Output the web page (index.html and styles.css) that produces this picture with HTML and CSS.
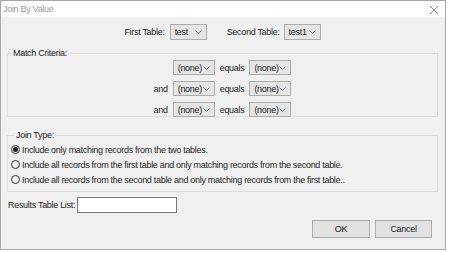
FILE: index.html
```html
<!DOCTYPE html>
<html lang="en">
<head>
    <meta charset="UTF-8">
    <title>Join By Value</title>
    <link rel="stylesheet" href="styles.css">
</head>
<body>
<div class="window">
    <div class="titlebar">
        <span class="title">Join By Value</span>
        <svg class="close" width="10" height="10" viewBox="0 0 10 10"><path d="M1 1L9 9M9 1L1 9" stroke="#8a8a8a" stroke-width="1"/></svg>
    </div>
    <div class="content">
        <div class="tables">
            <span class="label">First Table:</span>
            <div class="combo first">test<svg class="chev" width="7" height="4" viewBox="0 0 7 4"><path d="M0.5 0.5L3.5 3.5L6.5 0.5" fill="none" stroke="#7a7a7a"/></svg></div>
            <span class="label second-label">Second Table:</span>
            <div class="combo second">test1<svg class="chev" width="7" height="4" viewBox="0 0 7 4"><path d="M0.5 0.5L3.5 3.5L6.5 0.5" fill="none" stroke="#7a7a7a"/></svg></div>
        </div>

        <fieldset class="group match">
            <legend>Match Criteria:</legend>
            <div class="criteria">
                <span></span>
                <div class="combo field">(none)<svg class="chev" width="7" height="4" viewBox="0 0 7 4"><path d="M0.5 0.5L3.5 3.5L6.5 0.5" fill="none" stroke="#7a7a7a"/></svg></div>
                <span>equals</span>
                <div class="combo field">(none)<svg class="chev" width="7" height="4" viewBox="0 0 7 4"><path d="M0.5 0.5L3.5 3.5L6.5 0.5" fill="none" stroke="#7a7a7a"/></svg></div>

                <span>and</span>
                <div class="combo field">(none)<svg class="chev" width="7" height="4" viewBox="0 0 7 4"><path d="M0.5 0.5L3.5 3.5L6.5 0.5" fill="none" stroke="#7a7a7a"/></svg></div>
                <span>equals</span>
                <div class="combo field">(none)<svg class="chev" width="7" height="4" viewBox="0 0 7 4"><path d="M0.5 0.5L3.5 3.5L6.5 0.5" fill="none" stroke="#7a7a7a"/></svg></div>

                <span>and</span>
                <div class="combo field">(none)<svg class="chev" width="7" height="4" viewBox="0 0 7 4"><path d="M0.5 0.5L3.5 3.5L6.5 0.5" fill="none" stroke="#7a7a7a"/></svg></div>
                <span>equals</span>
                <div class="combo field">(none)<svg class="chev" width="7" height="4" viewBox="0 0 7 4"><path d="M0.5 0.5L3.5 3.5L6.5 0.5" fill="none" stroke="#7a7a7a"/></svg></div>
            </div>
        </fieldset>

        <fieldset class="group join">
            <legend>Join Type:</legend>
            <div class="radio"><span class="dot checked"></span>Include only matching records from the two tables.</div>
            <div class="radio"><span class="dot"></span>Include all records from the first table and only matching records from the second table.</div>
            <div class="radio"><span class="dot"></span>Include all records from the second table and only matching records from the first table..</div>
        </fieldset>

        <div class="results">
            <span class="label">Results Table List:</span>
            <div class="textbox"></div>
        </div>

        <div class="buttons">
            <div class="btn ok">OK</div>
            <div class="btn cancel">Cancel</div>
        </div>
    </div>
</div>
</body>
</html>
```

FILE: styles.css
```css
body{
    margin:0;
    background:#fff;
    font-family:"Liberation Sans",Arial,sans-serif;
    font-size:9px;
    letter-spacing:-0.3px;
    color:#1e1e1e;
}
.window{
    box-sizing:border-box;
    width:446px;
    height:250px;
    border:1px solid #a8a8a8;
    background:#f0f0f0;
    display:flex;
    flex-direction:column;
}
.titlebar{
    height:16px;
    background:#fff;
    display:flex;
    align-items:center;
    justify-content:space-between;
    padding:0 6px 0 2px;
}
.title{
    color:#9a9a9a;
    font-size:9px;
}
.close{
    margin-top:2px;
}
.content{
    flex:1;
    padding:7px 7px 0 6px;
    display:flex;
    flex-direction:column;
}
.tables{
    display:flex;
    align-items:center;
    justify-content:center;
    height:16px;
}
.label{
    margin-right:5px;
}
.second-label{
    margin-left:20px;
    margin-right:4px;
}
.combo{
    box-sizing:border-box;
    height:16px;
    background:#e5e5e5;
    border:1px solid #acacac;
    display:flex;
    align-items:center;
    justify-content:space-between;
    padding:0 4px 0 4px;
}
.combo.first{ width:37px; }
.combo.second{ width:37px; }
.combo.field{ width:42px; height:15px; }
.chev{
    flex:none;
}
.group{
    margin:0;
    border:1px solid #dcdcdc;
    padding:0;
}
.group legend{
    padding:0 1px;
    margin-left:4px;
    line-height:10px;
}
.match{
    margin-top:8px;
    height:69px;
    box-sizing:border-box;
}
.criteria{
    display:grid;
    grid-template-columns:auto auto auto auto;
    justify-content:center;
    align-items:center;
    column-gap:5px;
    row-gap:6px;
    margin-top:2px;
}
.criteria span{
    text-align:right;
}
.join{
    margin-top:13px;
    height:62px;
    box-sizing:border-box;
    padding:2px 0 0 3px;
}
.radio{
    display:flex;
    align-items:center;
    height:15px;
}
.dot{
    box-sizing:border-box;
    width:9px;
    height:9px;
    border:1px solid #333;
    border-radius:50%;
    margin-right:2px;
    display:flex;
    align-items:center;
    justify-content:center;
}
.dot.checked::after{
    content:"";
    width:5px;
    height:5px;
    border-radius:50%;
    background:#1e1e1e;
}
.results{
    display:flex;
    align-items:center;
    margin-top:5px;
    padding-left:1px;
}
.results .label{
    margin-right:2px;
}
.textbox{
    box-sizing:border-box;
    width:100px;
    height:16px;
    background:#fff;
    border:1px solid #7a7a7a;
}
.buttons{
    display:flex;
    justify-content:flex-end;
    gap:5px;
    margin-top:7px;
    padding-right:6px;
}
.btn{
    box-sizing:border-box;
    height:18px;
    background:#e1e1e1;
    border:1px solid #adadad;
    display:flex;
    align-items:center;
    justify-content:center;
}
.ok{ width:58px; }
.cancel{ width:57px; }
```
